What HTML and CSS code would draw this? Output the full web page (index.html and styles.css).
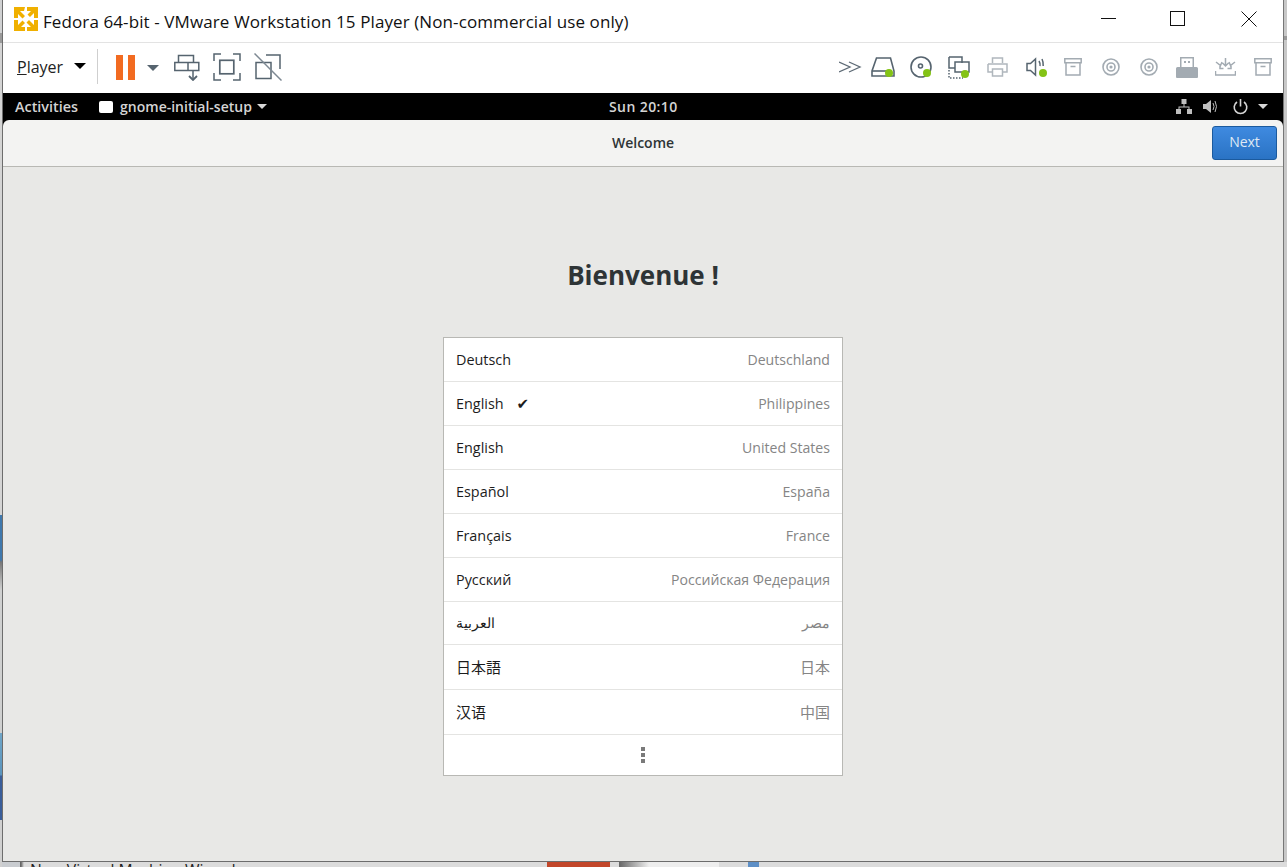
FILE: index.html
```html
<!DOCTYPE html>
<html lang="en">
<head>
    <meta charset="UTF-8">
    <meta name="viewport" content="width=device-width, initial-scale=1.0">
    <title>Fedora 64-bit - VMware Workstation 15 Player</title>
    <link rel="stylesheet" href="styles.css">
</head>
<body>
    <div class="vmware">
        <div class="titlebar">
            <svg class="logo" width="26" height="26" viewBox="0 0 26 26">
                <path fill="#f0b000" d="M1 1h11l-1 4H7l5 5-2.500 2.500-4.500-4.500v4H1zM14 1h11v11h-4V7l-4 4-2.500-2.500L18 5h-4zM25 14v11H14v-4h4l-4.500-4.500L16 14l5 5v-5zM12 25H1V14h4v5l4.500-4.500L12 17l-4 4h4z"/>
            </svg>
            <span class="wintitle">Fedora 64-bit - VMware Workstation 15 Player (Non-commercial use only)</span>
            <div class="wincontrols">
                <svg class="min" width="16" height="16" viewBox="0 0 16 16"><path d="M0 7.500h15" stroke="#111" fill="none"/></svg>
                <svg width="16" height="16" viewBox="0 0 16 16"><rect x=".5" y=".5" width="14" height="14" stroke="#111" fill="none"/></svg>
                <svg width="16" height="16" viewBox="0 0 16 16"><path d="M.5.5l15 15M15.500.5l-15 15" stroke="#111" fill="none"/></svg>
            </div>
        </div>
        <div class="toolbar">
            <span class="player"><u>P</u>layer</span>
            <span class="arrow black"></span>
            <span class="tool-sep"></span>
            <span class="pause"><i></i><i></i></span>
            <span class="arrow slate"></span>
            <div class="tools-left">
                <svg width="26" height="27" viewBox="0 0 26 27" fill="none" stroke="#56646f" stroke-width="1.500"><path d="M4.500 1.500h15v7h-15zM.8 8.500h24v8H.8zM14 8.500v8M19 16.500v9"/><path d="M15 22l4 4 4-4" stroke-width="1.800"/></svg>
                <svg width="28" height="28" viewBox="0 0 28 28" fill="none" stroke="#56646f" stroke-width="1.500"><path d="M1 8V1h7M20 1h7v7M1 20v7h7M20 27h7v-7"/><rect x="6.800" y="7.300" width="14" height="13.500" stroke-width="1.700"/></svg>
                <svg width="28" height="28" viewBox="0 0 28 28" fill="none" stroke="#56646f" stroke-width="1.500"><path d="M12 2h14v14M2 9.500h15v16H2z"/><path d="M.5.500l27 27" stroke="#7d8892"/></svg>
            </div>
            <div class="tools-right">
                <svg class="more-dev" width="23" height="14" viewBox="0 0 23 14" fill="none" stroke="#5d6a75" stroke-width="1.300"><path d="M0 2l11 5-11 5M10 2l11 5-11 5"/></svg>
                <span class="dev"><svg width="24" height="20" viewBox="0 0 24 20" fill="none" stroke="#56646f" stroke-width="1.600"><path d="M5.500 1h14l3.500 13v5H1v-5z"/><path d="M1 14h15"/></svg><b class="hdd"></b></span>
                <span class="dev"><svg width="22" height="22" viewBox="0 0 22 22" fill="none" stroke="#56646f" stroke-width="1.600"><circle cx="11" cy="11" r="10"/><circle cx="10.500" cy="10" r="2"/></svg><b></b></span>
                <span class="dev"><svg width="22" height="23" viewBox="0 0 22 23" fill="none" stroke="#56646f" stroke-width="1.500"><path d="M1 1h13v6M1 1v11h6M7 6h14v10H7z"/><path d="M1 14v8h14" stroke-dasharray="1.500 1.500"/></svg><b></b></span>
                <span class="dev"><svg width="21" height="20" viewBox="0 0 21 20" fill="none" stroke="#b0b7bd" stroke-width="1.500"><path d="M5.500 6V1h10v5M1 7h19v8h-4M5 15H1V7M5.500 12h10v7h-10z"/></svg></span>
                <span class="dev dev-snd"><svg width="22" height="20" viewBox="0 0 22 20" fill="none" stroke="#56646f" stroke-width="1.500"><path d="M1 6.500h3.500l5-4.500v16l-5-4.500H1zM13 4q1.500 2.500 1 5M16 2q1.500 3 1.200 7"/></svg><b class="snd"></b></span>
                <span class="dev"><svg width="18" height="18" viewBox="0 0 18 18" fill="none" stroke="#a3abb2" stroke-width="1.500"><path d="M.8.800h16.400v4H.8zM2 5v12h14V5M6.500 8.500h5"/></svg></span>
                <span class="dev"><svg width="18" height="18" viewBox="0 0 18 18" fill="none" stroke="#a3abb2" stroke-width="1.600"><circle cx="9" cy="9" r="8"/><circle cx="9" cy="9" r="4"/><circle cx="9" cy="9" r=".8"/></svg></span>
                <span class="dev"><svg width="18" height="18" viewBox="0 0 18 18" fill="none" stroke="#a3abb2" stroke-width="1.600"><circle cx="9" cy="9" r="8"/><circle cx="9" cy="9" r="4"/><circle cx="9" cy="9" r=".8"/></svg></span>
                <span class="dev"><svg width="22" height="21" viewBox="0 0 22 21"><path fill="#a3abb2" d="M4 0h14v10h-1.500V1.500h-11V10H4zM1.500 10h19q1.500 0 1.500 1.500V20q0 1-1 1H1q-1 0-1-1v-8.500Q0 10 1.500 10zM8 4h2v2H8zM12 4h2v2h-2z"/></svg></span>
                <span class="dev"><svg width="21" height="18" viewBox="0 0 21 18" fill="none" stroke="#a3abb2" stroke-width="1.500"><path d="M10.500 0v8M7.500 5l3 3 3-3M1 4l4.500 3.500L7 4M20 4l-4.500 3.500L14 4M5 8v2.500h3.500M16 8v2.500h-3.500M.5 13v4h20v-4"/></svg></span>
                <span class="dev"><svg width="18" height="18" viewBox="0 0 18 18" fill="none" stroke="#a3abb2" stroke-width="1.500"><path d="M.8.800h16.400v4H.8zM2 5v12h14V5M6.500 8.500h5"/></svg></span>
            </div>
        </div>
        <div class="topbar">
            <span class="activities">Activities</span>
            <span class="appicon"></span>
            <span class="appname">gnome-initial-setup</span>
            <span class="arrow white"></span>
            <span class="clock">Sun 20:10</span>
            <div class="tray">
                <svg width="16" height="15" viewBox="0 0 16 15" fill="#bfbfbf"><path d="M5.500 0h5v5h-5zM0 10h5v5H0zM11 10h5v5h-5zM7.500 5h1v2.500h5V10h-1V8.500h-9V10h-1V7.500h5z"/></svg>
                <svg width="16" height="15" viewBox="0 0 16 15" fill="none" stroke="#bfbfbf"><path fill="#bfbfbf" stroke="none" d="M0 5h3l5-4v13l-5-4H0z"/><path d="M10 4q2 3.500 0 7M12 2q3 5.500 0 11"/></svg>
                <svg class="power" width="15" height="16" viewBox="0 0 15 16" fill="none" stroke="#d4d4d4" stroke-width="1.600"><path d="M7.500 0v7.500M4 3a6.300 6.300 0 1 0 7 0"/></svg>
                <span class="arrow white tray-arrow"></span>
            </div>
        </div>
        <div class="guest">
            <div class="header">
                <span class="header-title">Welcome</span>
                <button class="next">Next</button>
            </div>
            <main class="content">
                <h1>Bienvenue !</h1>
                <div class="langs">
                    <div class="lang"><span>Deutsch</span><span class="region">Deutschland</span></div>
                    <div class="lang"><span>English</span><span class="check">✔</span><span class="region">Philippines</span></div>
                    <div class="lang"><span>English</span><span class="region">United States</span></div>
                    <div class="lang"><span>Español</span><span class="region">España</span></div>
                    <div class="lang"><span>Français</span><span class="region">France</span></div>
                    <div class="lang"><span>Русский</span><span class="region">Российская Федерация</span></div>
                    <div class="lang short"><span>العربية</span><span class="region">مصر</span></div>
                    <div class="lang tall"><span class="cjk" lang="ja">日本語</span><span class="region cjk" lang="ja">日本</span></div>
                    <div class="lang tall"><span class="cjk" lang="zh-CN">汉语</span><span class="region cjk" lang="zh-CN">中国</span></div>
                    <div class="more"><i></i><i></i><i></i></div>
                </div>
            </main>
        </div>
    </div>
    <div class="behind">
        <span class="wizard">New Virtual Machine Wizard</span>
        <span class="red"></span>
        <span class="shade"></span>
        <span class="blue"></span>
    </div>
</body>
</html>
```

FILE: styles.css
```css
html, body {
    margin: 0;
    height: 100%;
}
body {
    width: 1287px;
    height: 867px;
    overflow: hidden;
    font-family: "Open Sans", "Noto Sans", sans-serif;
    background-color: #c9ccd0;
    background-image:
        linear-gradient(#d0d1d2 0, #d0d1d2 33px, #9a9a9a 33px, #9a9a9a 43px, #d4d4d4 43px, #d4d4d4 515px, #3f78ad 515px, #3f78ad 560px, #777 562px, #cfd0d0 590px, #cfd0d0 733px, #6fa6c8 733px, #5a94bd 775px, #3a5e9a 776px, #3a5e9a 820px, #d0d0d0 820px),
        linear-gradient(#c8c8c8 0, #c8c8c8 36px, #999 36px, #999 40px, #c8c8c8 40px);
    background-size: 2px 100%, 3px 100%;
    background-position: 0 0, 100% 0;
    background-repeat: no-repeat;
}
.vmware {
    width: 1282px;
    height: 862px;
    margin-left: 2px;
    display: flex;
    flex-direction: column;
    background: #fff;
    box-sizing: border-box;
    border-left: 1px solid #6d6d6d;
    border-bottom: 1px solid #6d6d6d;
    border-right: 1px solid #777;
}
.titlebar {
    height: 43px;
    box-sizing: border-box;
    flex: none;
    display: flex;
    align-items: center;
    border-bottom: 1px solid #e3e3e3;
    padding-left: 10px;
}
.logo {
    margin-right: 4px;
    margin-top: -5px;
}
.wintitle {
    font-size: 17px;
    letter-spacing: .1px;
    color: #111;
}
.wincontrols {
    margin-left: auto;
    display: flex;
    gap: 55px;
    padding-right: 26px;
    padding-bottom: 4px;
}
.wincontrols .min {
    margin-right: -2px;
}
.toolbar {
    height: 50px;
    flex: none;
    display: flex;
    align-items: center;
    padding-left: 14px;
    padding-right: 1px;
}
.player {
    font-size: 16px;
    color: #222;
    margin-top: -3px;
}
.arrow {
    width: 0;
    height: 0;
    border-left: 6px solid transparent;
    border-right: 6px solid transparent;
    border-top: 6px solid #000;
}
.arrow.black {
    margin-left: 11px;
    margin-top: -4px;
}
.arrow.slate {
    border-top-color: #56646f;
    margin-left: 12px;
}
.arrow.white {
    border-left-width: 5px;
    border-right-width: 5px;
    border-top: 5px solid #d8d8d8;
}
.tool-sep {
    width: 1px;
    height: 35px;
    background: #cfcfcf;
    margin: -3px 18px 0 11px;
}
.pause {
    display: flex;
    gap: 5px;
    margin-top: -2px;
}
.pause i {
    display: block;
    width: 7px;
    height: 25px;
    background: #f26b21;
}
.tools-left {
    display: flex;
    align-items: center;
    gap: 13px;
    margin-left: 15px;
    margin-top: -2px;
}
.tools-right {
    margin-left: auto;
    margin-top: -2px;
    display: flex;
    align-items: center;
}
.more-dev {
    margin-right: 2px;
}
.dev {
    position: relative;
    width: 38px;
    display: flex;
    justify-content: center;
}
.dev b {
    position: absolute;
    right: 9px;
    bottom: 1px;
    width: 8px;
    height: 8px;
    border-radius: 50%;
    background: #84c316;
}
.dev b.hdd {
    bottom: 0;
}
.dev b.snd {
    right: 7px;
    bottom: 0;
}
.dev-snd svg {
    margin-left: 3px;
}
.topbar {
    height: 27px;
    flex: none;
    background: #000;
    position: relative;
    display: flex;
    align-items: center;
    padding-left: 12px;
    color: #d4d4d4;
    font-size: 14px;
    font-weight: 600;
}
.activities {
    font-size: 14.400px;
}
.appicon {
    width: 14px;
    height: 12px;
    background: #fff;
    border-radius: 2px;
    margin-left: 21px;
    margin-right: 7px;
}
.appname {
    margin-right: 5px;
}
.clock {
    position: absolute;
    left: 606px;
    letter-spacing: .4px;
}
.tray {
    margin-left: auto;
    display: flex;
    align-items: center;
    gap: 11px;
    padding-right: 15px;
}
.power {
    margin-left: 3px;
}
.tray-arrow {
    margin-left: -1px;
}
.guest {
    flex: 1;
    display: flex;
    flex-direction: column;
    background: #000;
    min-height: 0;
}
.header {
    height: 47px;
    flex: none;
    position: relative;
    display: flex;
    align-items: center;
    justify-content: center;
    padding-bottom: 2px;
    background: #f3f3f2;
    border-radius: 6px 6px 0 0;
    border-bottom: 1px solid #b8b8b4;
    box-sizing: border-box;
}
.header-title {
    font-size: 14px;
    font-weight: 600;
    color: #2e3436;
}
.next {
    position: absolute;
    right: 6px;
    top: 6px;
    width: 65px;
    height: 34px;
    padding: 0 0 3px;
    border: 1px solid #1b5a9e;
    border-radius: 3px;
    background: linear-gradient(#3f8ae0, #2a73c4);
    color: #dfe9f4;
    font-family: inherit;
    font-size: 14px;
}
.content {
    flex: 1;
    background: #e8e8e6;
    display: flex;
    flex-direction: column;
    align-items: center;
}
h1 {
    margin: 88px 0 0;
    height: 82px;
    font-size: 26px;
    line-height: 40px;
    font-weight: 700;
    color: #2e3436;
}
.langs {
    width: 400px;
    box-sizing: border-box;
    border: 1px solid #b8b8b4;
    background: #fff;
}
.lang {
    height: 44px;
    box-sizing: border-box;
    display: flex;
    align-items: center;
    padding: 0 12px;
    border-bottom: 1px solid #e4e4e2;
    font-size: 14.400px;
    color: #1c1c1c;
}
.lang .cjk {
    font-family: "Noto Sans CJK JP", sans-serif;
    font-size: 15px;
}
.lang .cjk[lang="zh-CN"] {
    font-family: "Noto Sans CJK SC", sans-serif;
}
.lang.short {
    height: 43px;
    padding-bottom: 2px;
}
.lang.tall {
    height: 45px;
    padding-bottom: 2px;
}
.check {
    margin-left: 13px;
    font-family: "DejaVu Sans", sans-serif;
    font-size: 15px;
}
.region {
    margin-left: auto;
    font-size: 14.100px;
    color: #858585;
}
.more {
    height: 40px;
    display: flex;
    flex-direction: column;
    align-items: center;
    justify-content: center;
    gap: 2px;
}
.more i {
    display: block;
    width: 4px;
    height: 4px;
    background: #7a7a7a;
}
.behind {
    height: 5px;
    display: flex;
    overflow: hidden;
    background: linear-gradient(90deg, #666 0, #666 1px, #dcdcdc 4px);
    font-size: 15.700px;
    color: #222;
    margin-left: 20px;
}
.wizard {
    margin-left: 10px;
    width: 517px;
    line-height: 17px;
    white-space: nowrap;
}
.red {
    width: 63px;
    background: #c2462a;
}
.shade {
    width: 100px;
    margin-left: 9px;
    background: linear-gradient(90deg, #666, #eee 30%);
}
.blue {
    width: 11px;
    margin-left: 29px;
    background: #5d8fc6;
}
```
